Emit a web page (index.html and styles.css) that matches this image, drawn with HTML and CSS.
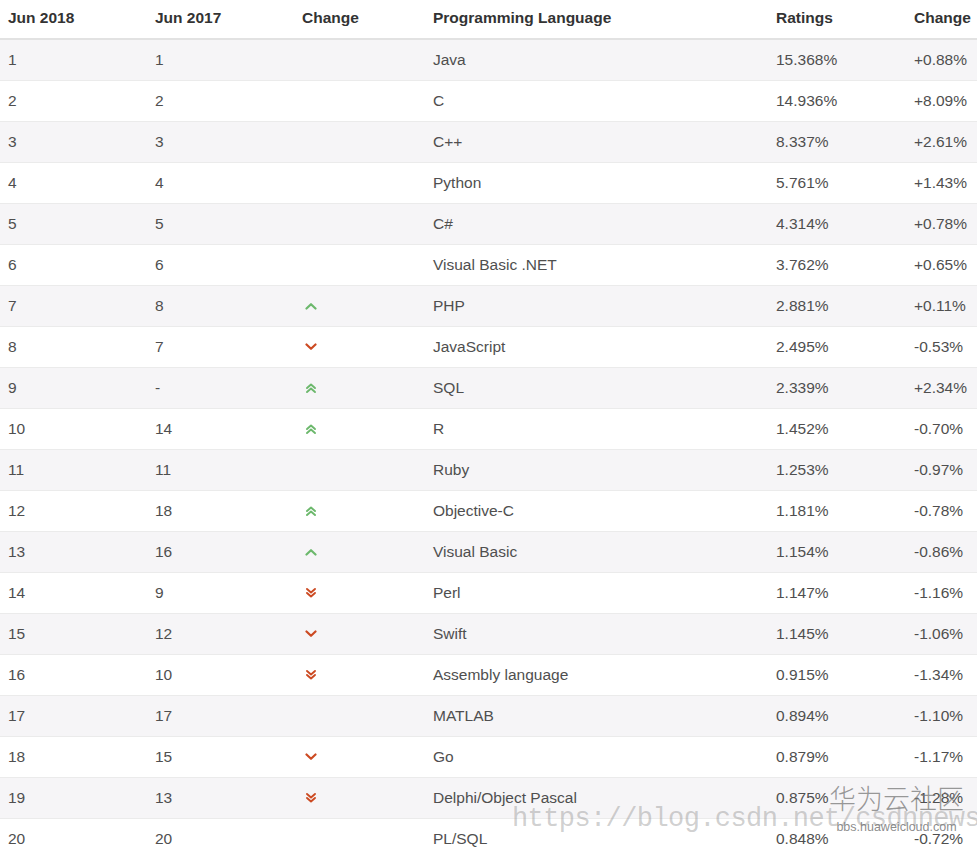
FILE: index.html
```html
<!DOCTYPE html>
<html>
<head>
<meta charset="utf-8">
<link rel="stylesheet" href="styles.css">
</head>
<body>
<svg width="0" height="0" class="defs">
  <defs>
    <symbol id="up" viewBox="0 0 12 8"><path d="M1.5 6.5 L6 2.2 L10.5 6.5" fill="none" stroke-width="2.2" stroke-linecap="round" stroke-linejoin="round"/></symbol>
    <symbol id="down" viewBox="0 0 12 8"><path d="M1.5 1.5 L6 5.8 L10.5 1.5" fill="none" stroke-width="2.2" stroke-linecap="round" stroke-linejoin="round"/></symbol>
    <symbol id="up2" viewBox="0 0 12 12"><path d="M2 6 L6 2.5 L10 6 M2 10 L6 6.5 L10 10" fill="none" stroke-width="1.9" stroke-linecap="round" stroke-linejoin="round"/></symbol>
    <symbol id="down2" viewBox="0 0 12 12"><path d="M2 2 L6 5.5 L10 2 M2 6 L6 9.5 L10 6" fill="none" stroke-width="1.9" stroke-linecap="round" stroke-linejoin="round"/></symbol>
  </defs>
</svg>
<table class="tiobe">
  <colgroup>
    <col class="c1"><col class="c2"><col class="c3"><col class="c4"><col class="c5"><col class="c6">
  </colgroup>
  <thead>
    <tr><th>Jun 2018</th><th>Jun 2017</th><th>Change</th><th>Programming Language</th><th>Ratings</th><th>Change</th></tr>
  </thead>
  <tbody>
    <tr><td>1</td><td>1</td><td></td><td>Java</td><td>15.368%</td><td>+0.88%</td></tr>
    <tr><td>2</td><td>2</td><td></td><td>C</td><td>14.936%</td><td>+8.09%</td></tr>
    <tr><td>3</td><td>3</td><td></td><td>C++</td><td>8.337%</td><td>+2.61%</td></tr>
    <tr><td>4</td><td>4</td><td></td><td>Python</td><td>5.761%</td><td>+1.43%</td></tr>
    <tr><td>5</td><td>5</td><td></td><td>C#</td><td>4.314%</td><td>+0.78%</td></tr>
    <tr><td>6</td><td>6</td><td></td><td>Visual Basic .NET</td><td>3.762%</td><td>+0.65%</td></tr>
    <tr><td>7</td><td>8</td><td class="ic"><svg class="i up s"><use href="#up"/></svg></td><td>PHP</td><td>2.881%</td><td>+0.11%</td></tr>
    <tr><td>8</td><td>7</td><td class="ic"><svg class="i dn s"><use href="#down"/></svg></td><td>JavaScript</td><td>2.495%</td><td>-0.53%</td></tr>
    <tr><td>9</td><td>-</td><td class="ic"><svg class="i up d"><use href="#up2"/></svg></td><td>SQL</td><td>2.339%</td><td>+2.34%</td></tr>
    <tr><td>10</td><td>14</td><td class="ic"><svg class="i up d"><use href="#up2"/></svg></td><td>R</td><td>1.452%</td><td>-0.70%</td></tr>
    <tr><td>11</td><td>11</td><td></td><td>Ruby</td><td>1.253%</td><td>-0.97%</td></tr>
    <tr><td>12</td><td>18</td><td class="ic"><svg class="i up d"><use href="#up2"/></svg></td><td>Objective-C</td><td>1.181%</td><td>-0.78%</td></tr>
    <tr><td>13</td><td>16</td><td class="ic"><svg class="i up s"><use href="#up"/></svg></td><td>Visual Basic</td><td>1.154%</td><td>-0.86%</td></tr>
    <tr><td>14</td><td>9</td><td class="ic"><svg class="i dn d"><use href="#down2"/></svg></td><td>Perl</td><td>1.147%</td><td>-1.16%</td></tr>
    <tr><td>15</td><td>12</td><td class="ic"><svg class="i dn s"><use href="#down"/></svg></td><td>Swift</td><td>1.145%</td><td>-1.06%</td></tr>
    <tr><td>16</td><td>10</td><td class="ic"><svg class="i dn d"><use href="#down2"/></svg></td><td>Assembly language</td><td>0.915%</td><td>-1.34%</td></tr>
    <tr><td>17</td><td>17</td><td></td><td>MATLAB</td><td>0.894%</td><td>-1.10%</td></tr>
    <tr><td>18</td><td>15</td><td class="ic"><svg class="i dn s"><use href="#down"/></svg></td><td>Go</td><td>0.879%</td><td>-1.17%</td></tr>
    <tr><td>19</td><td>13</td><td class="ic"><svg class="i dn d"><use href="#down2"/></svg></td><td>Delphi/Object Pascal</td><td>0.875%</td><td>-1.28%</td></tr>
    <tr><td>20</td><td>20</td><td></td><td>PL/SQL</td><td>0.848%</td><td>-0.72%</td></tr>
  </tbody>
</table>
<div class="wm-url">https://blog.csdn.net/csdnnews</div>
<div class="wm-hw">
  <div class="wm-cn">华为云社区</div>
  <div class="wm-sub">bbs.huaweicloud.com</div>
</div>
</body>
</html>
```
FILE: styles.css
```css
html, body {
  margin: 0;
  padding: 0;
  background: #ffffff;
  overflow: hidden;
}
body {
  width: 977px;
  height: 854px;
  position: relative;
  font-family: "Liberation Sans", Arial, sans-serif;
  font-size: 15.5px;
  color: #4f4f4f;
}
.defs {
  position: absolute;
}
.tiobe {
  border-collapse: collapse;
  width: 977px;
  table-layout: fixed;
}
.c1 { width: 147px; }
.c2 { width: 147px; }
.c3 { width: 131px; }
.c4 { width: 343px; }
.c5 { width: 138px; }
.c6 { width: 71px; }
.tiobe th {
  text-align: left;
  font-weight: bold;
  color: #333333;
  height: 36px;
  padding: 0 0 2px 8px;
  vertical-align: middle;
  border-bottom: 2px solid #e2e2e2;
  white-space: nowrap;
}
.tiobe td {
  height: 40px;
  padding: 0 0 0 8px;
  border-top: 1px solid #ebebeb;
  vertical-align: middle;
  white-space: nowrap;
}
.tiobe tbody tr:nth-child(odd) td {
  background: #f6f5f7;
}
.tiobe tbody tr:first-child td {
  border-top: none;
}
.tiobe td.ic {
  padding-left: 11px;
}
.i {
  display: block;
}
.i.s {
  width: 12px;
  height: 8px;
}
.i.d {
  width: 12px;
  height: 12px;
}
.i.up {
  stroke: #6cb86c;
}
.i.dn {
  stroke: #cc4a22;
}
.wm-url {
  position: absolute;
  left: 512px;
  top: 804px;
  font-family: "Liberation Mono", "Courier New", monospace;
  font-size: 27px;
  letter-spacing: -0.6px;
  color: rgba(150,150,150,0.45);
  white-space: nowrap;
}
.wm-hw {
  position: absolute;
  left: 829px;
  top: 781px;
  display: flex;
  flex-direction: column;
  align-items: center;
}
.wm-cn {
  font-family: "Noto Sans CJK SC", sans-serif;
  font-size: 27px;
  line-height: 34px;
  font-weight: 300;
  color: rgba(120,120,120,0.75);
}
.wm-sub {
  font-family: "Liberation Sans", Arial, sans-serif;
  font-size: 12.5px;
  line-height: 14px;
  color: rgba(110,110,110,0.8);
  margin-top: 5px;
}
```
